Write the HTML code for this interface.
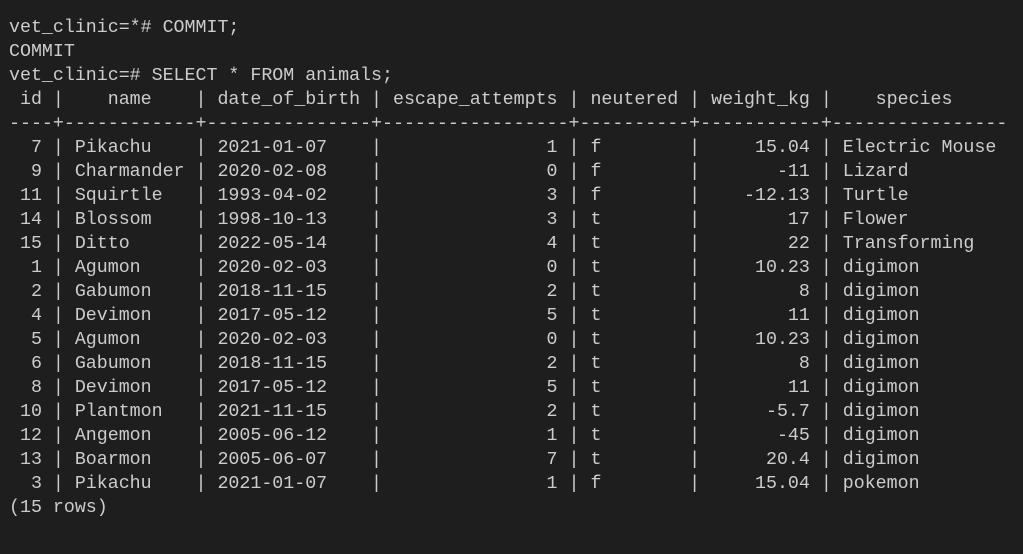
<!DOCTYPE html>
<html><head><style>
html,body{margin:0;padding:0;background:#1e1e1e;width:1023px;height:554px;overflow:hidden}
pre{margin:0;position:absolute;left:9px;top:16px;font-family:"Liberation Mono","DejaVu Sans Mono",monospace;font-size:18.3px;line-height:24px;color:#cccccc}
</style></head><body>
<pre>vet_clinic=*# COMMIT;
COMMIT
vet_clinic=# SELECT * FROM animals;
 id |    name    | date_of_birth | escape_attempts | neutered | weight_kg |    species
----+------------+---------------+-----------------+----------+-----------+----------------
  7 | Pikachu    | 2021-01-07    |               1 | f        |     15.04 | Electric Mouse
  9 | Charmander | 2020-02-08    |               0 | f        |       -11 | Lizard
 11 | Squirtle   | 1993-04-02    |               3 | f        |    -12.13 | Turtle
 14 | Blossom    | 1998-10-13    |               3 | t        |        17 | Flower
 15 | Ditto      | 2022-05-14    |               4 | t        |        22 | Transforming
  1 | Agumon     | 2020-02-03    |               0 | t        |     10.23 | digimon
  2 | Gabumon    | 2018-11-15    |               2 | t        |         8 | digimon
  4 | Devimon    | 2017-05-12    |               5 | t        |        11 | digimon
  5 | Agumon     | 2020-02-03    |               0 | t        |     10.23 | digimon
  6 | Gabumon    | 2018-11-15    |               2 | t        |         8 | digimon
  8 | Devimon    | 2017-05-12    |               5 | t        |        11 | digimon
 10 | Plantmon   | 2021-11-15    |               2 | t        |      -5.7 | digimon
 12 | Angemon    | 2005-06-12    |               1 | t        |       -45 | digimon
 13 | Boarmon    | 2005-06-07    |               7 | t        |      20.4 | digimon
  3 | Pikachu    | 2021-01-07    |               1 | f        |     15.04 | pokemon
(15 rows)</pre>
</body></html>
